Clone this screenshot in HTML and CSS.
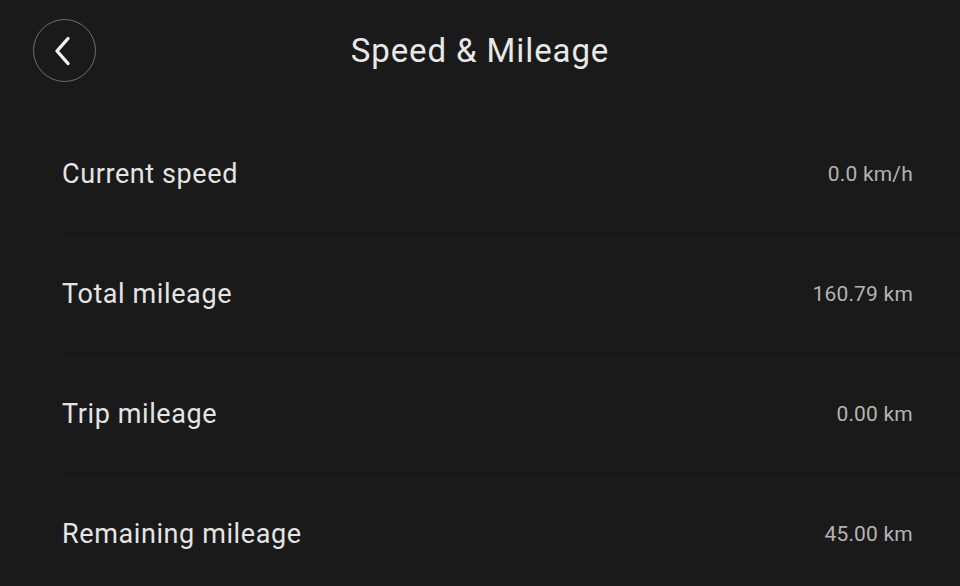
FILE: index.html
```html
<!DOCTYPE html>
<html lang="en">
  <head>
    <meta charset="UTF-8" />
    <meta name="viewport" content="width=device-width, initial-scale=1.0" />
    <title>Speed &amp; Mileage</title>
    <link rel="stylesheet" href="styles.css">
  </head>
  <body>
    <div class="page">
      <header class="header">
        <button class="back" aria-label="Back">
          <svg width="22" height="30" viewBox="0 0 22 30">
            <path d="M16 2.5 L5 15 L16 27.5" fill="none" stroke="#f2f2f2" stroke-width="3.4" stroke-linecap="round" stroke-linejoin="round" />
          </svg>
        </button>
        <h1>Speed &amp; Mileage</h1>
      </header>

      <div class="list">
        <div class="row">
          <span class="label">Current speed</span>
          <span class="value">0.0 km/h</span>
        </div>
        <div class="row">
          <span class="label">Total mileage</span>
          <span class="value">160.79 km</span>
        </div>
        <div class="row">
          <span class="label">Trip mileage</span>
          <span class="value">0.00 km</span>
        </div>
        <div class="row">
          <span class="label">Remaining mileage</span>
          <span class="value">45.00 km</span>
        </div>
      </div>
    </div>
  </body>
</html>
```

FILE: styles.css
```css
html,
body {
  margin: 0;
  padding: 0;
  height: 100%;
  background-color: #1a1a1a;
  color: #e6e6e6;
  font-family: Roboto, "Noto Sans", sans-serif;
  overflow: hidden;
}
.page {
  width: 960px;
  height: 586px;
}
.header {
  position: relative;
  height: 114px;
  display: flex;
  justify-content: center;
}
.header h1 {
  margin: 0;
  padding-top: 30px;
  font-size: 33px;
  font-weight: 400;
  line-height: 42px;
  letter-spacing: 0.9px;
  color: #e8e8e8;
}
.back {
  position: absolute;
  left: 33px;
  top: 19px;
  width: 63px;
  height: 63px;
  border-radius: 50%;
  border: 1.5px solid #6e6e6e;
  background: transparent;
  display: flex;
  align-items: center;
  justify-content: center;
  padding: 0 4px 0 0;
  cursor: pointer;
}
.list {
  padding-left: 63px;
}
.row {
  height: 119px;
  display: flex;
  align-items: center;
  justify-content: space-between;
  padding-right: 47px;
  border-bottom: 1px solid #121212;
}
.row:last-child {
  border-bottom: none;
}
.label {
  margin-left: -1px;
  font-size: 27px;
  letter-spacing: 0.6px;
  color: #e4e4e4;
}
.value {
  font-size: 21px;
  letter-spacing: 0.2px;
  color: #b3b3b3;
}
```
